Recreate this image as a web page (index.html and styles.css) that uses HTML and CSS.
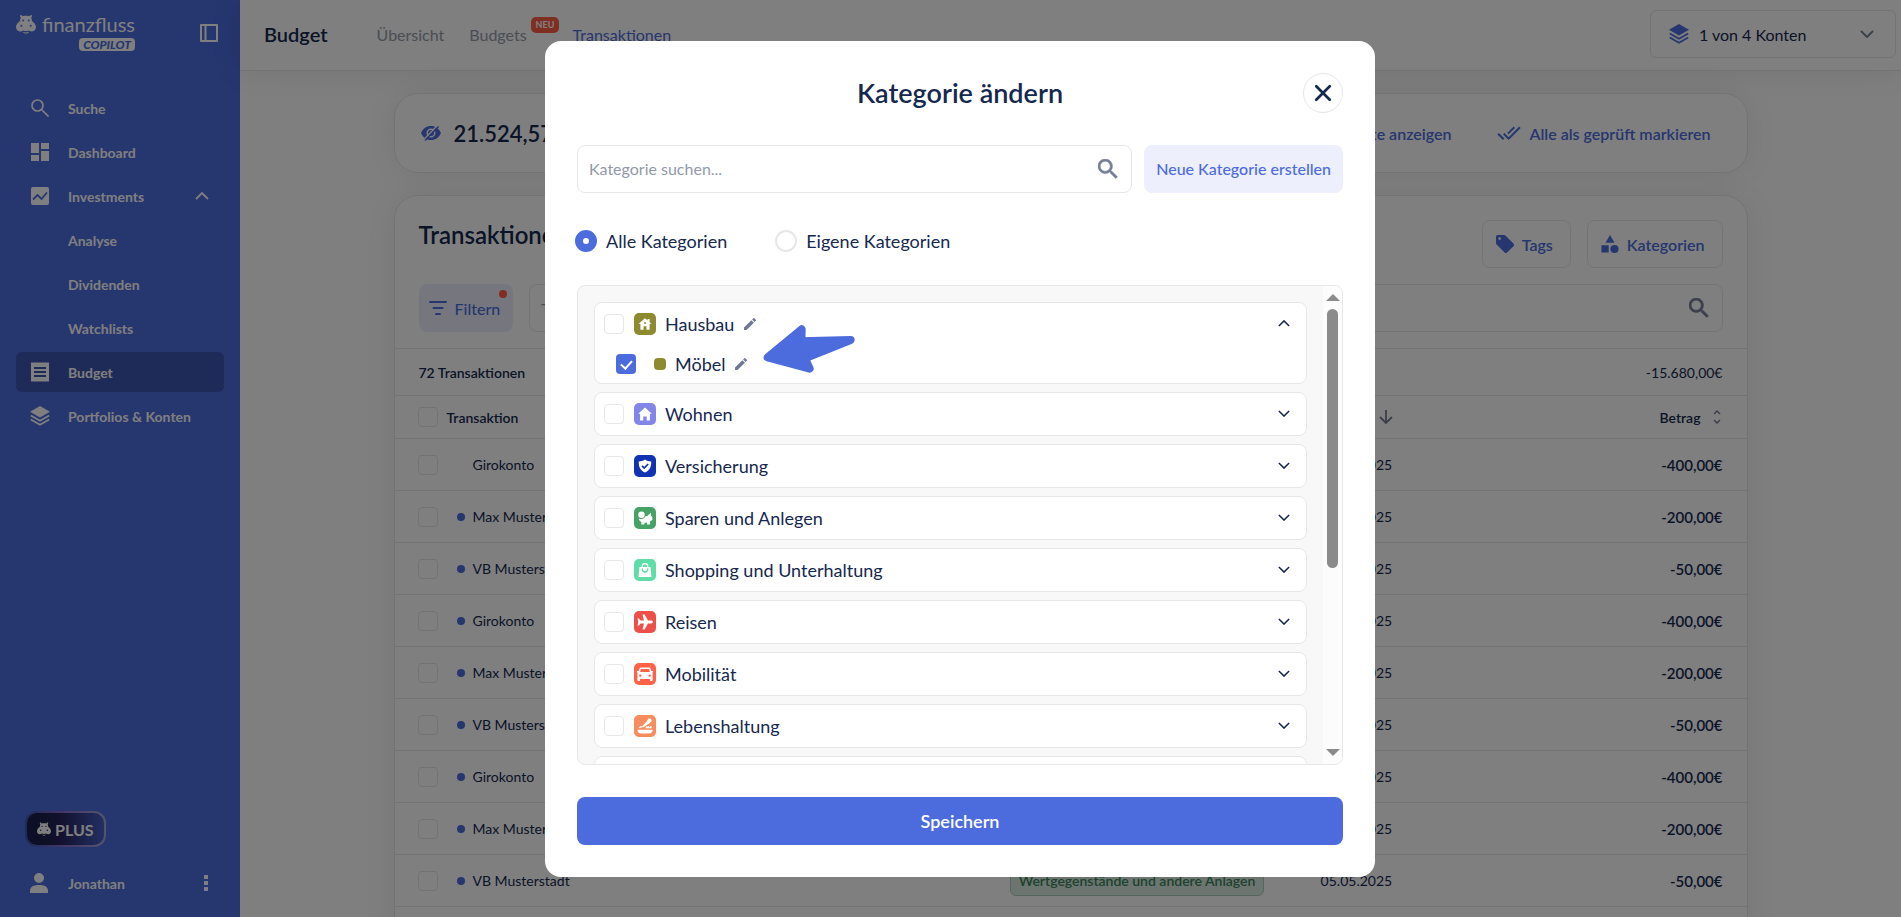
FILE: index.html
```html
<!DOCTYPE html>
<html lang="de">
<head>
    <meta charset="UTF-8">
    <meta name="viewport" content="width=device-width, initial-scale=1.0">
    <title>Budget - Transaktionen</title>
    <link rel="stylesheet" href="styles.css">
</head>
<body>
    <svg class="sprite" aria-hidden="true">
        <symbol id="hippo" viewBox="0 0 20 19">
            <path fill-rule="evenodd" d="M4 1.2C4 .3 5.300 0 6 1l.6.8C8.500 1.200 11.500 1.200 13.400 1.800L14 1c.7-1 2-.7 2 .2 0 .9-.4 1.600-.9 2 .6 1 .9 2.200 1 3.500C18.300 8 20 10.200 20 12.600 20 15.200 18.200 17 16 17c-1.200 0-2.200-.5-3-1.100-.9.4-1.900.6-3 .6s-2.100-.2-3-.6c-.8.6-1.800 1.100-3 1.100-2.200 0-4-1.800-4-4.400C0 10.200 1.700 8 3.900 6.700c.1-1.300.4-2.500 1-3.500C4.400 2.800 4 2.100 4 1.200zM7.200 5a.9.9 0 100 1.800.9.9 0 000-1.800zm5.600 0a.9.9 0 100 1.800.9.9 0 000-1.800zM5.300 10.200a1 1 0 100 2 1 1 0 000-2zm9.400 0a1 1 0 100 2 1 1 0 000-2z"/>
            <path d="M7 17.500c2 .6 4 .6 6 0-.8 2-5.200 2-6 0z"/>
        </symbol>
        <symbol id="search" viewBox="3 3 18 18">
            <path d="M15.500 14h-.79l-.28-.27C15.410 12.590 16 11.110 16 9.500 16 5.910 13.090 3 9.500 3S3 5.910 3 9.500 5.910 16 9.500 16c1.610 0 3.090-.59 4.230-1.570l.27.28v.79l5 4.990L20.490 19l-4.990-5zm-6 0C7.010 14 5 11.990 5 9.500S7.010 5 9.500 5 14 7.010 14 9.500 11.990 14 9.500 14z" stroke="currentColor" stroke-width=".5"/>
        </symbol>
        <symbol id="search-thin" viewBox="0 0 18 18">
            <path d="M11 11l6.500 6.500M12 6.500a5.500 5.500 0 11-11 0 5.500 5.500 0 0111 0z" fill="none" stroke="currentColor" stroke-width="1.700"/>
        </symbol>
        <symbol id="dashboard" viewBox="3 3 18 18">
            <path d="M3 13h8V3H3v10zm0 8h8v-6H3v6zm10 0h8V11h-8v10zm0-18v6h8V3h-8z"/>
        </symbol>
        <symbol id="chart" viewBox="0 0 18 18">
            <path d="M2 0h14a2 2 0 012 2v14a2 2 0 01-2 2H2a2 2 0 01-2-2V2a2 2 0 012-2z"/>
            <path d="M2 12.500L6.500 8l4 4L16 5.500" fill="none" stroke="#4c6cde" stroke-width="1.800"/>
        </symbol>
        <symbol id="receipt" viewBox="3 2 18 20">
            <path d="M18 17H6v-2h12v2zm0-4H6v-2h12v2zm0-4H6V7h12v2zM3 22l1-1 1 1 1-1 1 1 1-1 1 1 1-1 1 1 1-1 1 1 1-1 1 1 1-1 1 1 1-1 1 1 1-1 1 1V2l-1 1-1-1-1 1-1-1-1 1-1-1-1 1-1-1-1 1-1-1-1 1-1-1-1 1-1-1-1 1-1-1-1 1-1-1z" fill-rule="evenodd"/>
        </symbol>
        <symbol id="layers" viewBox="0 0 20 20">
            <path d="M10 0l10 5.800-10 5.800L0 5.800z"/>
            <path d="M.8 9.500L10 14.800l9.200-5.300M.8 13.400L10 18.700l9.200-5.300" fill="none" stroke="currentColor" stroke-width="1.700"/>
        </symbol>
        <symbol id="person" viewBox="0 0 18 20">
            <path d="M9 0a5 5 0 110 10A5 5 0 019 0zM0 20v-2c0-4 3-6 9-6s9 2 9 6v2z"/>
        </symbol>
        <symbol id="dots" viewBox="0 0 4 16">
            <path d="M0 0h4v4H0zM0 6h4v4H0zM0 12h4v4H0z"/>
        </symbol>
        <symbol id="panel" viewBox="0 0 18 18">
            <path d="M1 1h16v16H1zM5.500 1v16" fill="none" stroke="currentColor" stroke-width="2" stroke-linejoin="round"/>
        </symbol>
        <symbol id="chevron" viewBox="0 0 14 8">
            <path d="M1 1l6 6 6-6" fill="none" stroke="currentColor" stroke-width="1.800"/>
        </symbol>
        <symbol id="eye-off" viewBox="0 0 20 16">
            <path d="M10 1c4.500 0 8 2.600 10 7-2 4.400-5.500 7-10 7S2 12.400 0 8c2-4.400 5.500-7 10-7zm0 2.500a4.500 4.500 0 100 9 4.500 4.500 0 000-9z" fill-rule="evenodd"/>
            <circle cx="10" cy="8" r="3"/>
            <path d="M3 14.500L16.500.5" stroke="#fff" stroke-width="1.500"/>
            <path d="M4 15.500L17.500 1.500" stroke="currentColor" stroke-width="1.400"/>
        </symbol>
        <symbol id="done-all" viewBox="0 5 24 14">
            <path d="M18 7l-1.410-1.410-6.340 6.340 1.410 1.410L18 7zm4.240-1.410L11.660 16.170 7.480 12l-1.410 1.410L11.660 19l12-12-1.420-1.410zM.41 13.410L6 19l1.410-1.410L1.830 12 .41 13.410z"/>
        </symbol>
        <symbol id="tag" viewBox="2 2 20 20">
            <path d="M21.410 11.580l-9-9C12.050 2.220 11.550 2 11 2H4c-1.100 0-2 .9-2 2v7c0 .55.22 1.050.59 1.420l9 9c.36.36.86.58 1.410.58s1.050-.22 1.410-.59l7-7c.37-.36.59-.86.59-1.410s-.23-1.060-.59-1.420zM6 7.500a1.500 1.500 0 110-3 1.500 1.500 0 010 3z"/>
        </symbol>
        <symbol id="shapes" viewBox="3 2 19 20">
            <path d="M12.500 2L7.500 10.500h10zM3 13.500h8v8H3z"/>
            <circle cx="17.500" cy="17.500" r="4.500"/>
        </symbol>
        <symbol id="filter" viewBox="0 0 18 14">
            <path d="M1 1h16M4.500 7h9M7 13h4" stroke="currentColor" stroke-width="2" stroke-linecap="round"/>
        </symbol>
        <symbol id="arrow-down" viewBox="0 0 14 14">
            <path d="M7 0v12.500M1 7l6 6 6-6" fill="none" stroke="currentColor" stroke-width="1.800"/>
        </symbol>
        <symbol id="sort" viewBox="0 0 8 14">
            <path d="M1 4l3-3 3 3M1 10l3 3 3-3" fill="none" stroke="currentColor" stroke-width="1.500"/>
        </symbol>
        <symbol id="close" viewBox="0 0 16 16">
            <path d="M2 2l12 12M14 2L2 14" stroke="currentColor" stroke-width="2.400" stroke-linecap="round"/>
        </symbol>
        <symbol id="pencil" viewBox="3 3 18 18">
            <path d="M3 17.250V21h3.750L17.810 9.940l-3.750-3.750L3 17.250zM20.710 7.040a1 1 0 000-1.410l-2.340-2.340a1 1 0 00-1.410 0l-1.830 1.830 3.750 3.750 1.830-1.830z"/>
        </symbol>
        <symbol id="cat-build" viewBox="0 0 22 22">
            <path d="M11 5.200l2.600 2.200V6h2v3.100l1.900 1.700h-1.900v6h-3.200v-3.500H9.600v3.500H6.400v-6H4.500z"/>
            <circle cx="11" cy="10" r="1" fill="#8d8a30"/>
        </symbol>
        <symbol id="cat-home" viewBox="0 0 22 22">
            <path d="M11 4.600l6.800 6.200h-1.900V17.500h-3.200v-4H9.300v4H6.100v-6.700H4.200z"/>
        </symbol>
        <symbol id="cat-shield" viewBox="0 0 22 22">
            <path d="M11 4.500c2 1.500 4 1.900 6.200 1.900.4 5-1.700 9-6.200 11.100C6.500 15.400 4.400 11.400 4.800 6.400c2.200 0 4.200-.4 6.200-1.900z"/>
            <path d="M8 10.800l2.300 2.300L14.200 9" fill="none" stroke="#1232b4" stroke-width="1.700"/>
        </symbol>
        <symbol id="cat-pig" viewBox="0 0 22 22">
            <circle cx="7.500" cy="7.700" r="3.200"/>
            <path d="M4.800 11.500c2.600 1.300 5.700.3 6.900-2.500h1.500l3.800-3.200v3l1.300 1.300v2.900l-2.200 1.300v3.200H13v-1.800h-2.600v1.800H7.300v-2.600c-1.600-.8-2.500-2-2.500-3.400z"/>
        </symbol>
        <symbol id="cat-bag" viewBox="0 0 22 22">
            <path d="M5.500 8h11l1 10h-13z"/>
            <path d="M8.300 9V7.300a2.700 2.700 0 015.400 0V9" fill="none" stroke="#fff" stroke-width="1.300"/>
            <path d="M8.300 9.500v.8a2.700 2.700 0 005.400 0v-.8" fill="none" stroke="#5edea6" stroke-width="1.300"/>
        </symbol>
        <symbol id="cat-plane" viewBox="0 0 22 22">
            <path d="M8.500 3.500h2L14 9.600h3.300c2.200 0 2.200 2.800 0 2.800H14l-3.500 6.100h-2l1.500-6.100H6.500L5 14.400H3.500L4.300 11l-.8-3.400H5l1.500 2H10z"/>
        </symbol>
        <symbol id="cat-car" viewBox="0 0 22 22">
            <path fill-rule="evenodd" d="M7 4.500h8c.8 0 1.300.4 1.500 1L17.400 8h1.700v1.500h-1l.5 1V17c0 .6-.4 1-1 1h-1.500v-2H5.900v2H4.400c-.6 0-1-.4-1-1v-6.500l.5-1h-1V8h1.700L5.500 5.500c.2-.6.7-1 1.500-1zM6.900 6.100L6.100 9h9.800l-.8-2.900zM6.300 11.400a1.200 1.200 0 100 2.400 1.200 1.200 0 000-2.400zm9.400 0a1.200 1.200 0 100 2.400 1.200 1.200 0 000-2.400z"/>
        </symbol>
        <symbol id="cat-food" viewBox="0 0 22 22">
            <path d="M3.500 14.800h15.200c0 2.400-1.500 3.700-3.700 3.700H7.200c-2.200 0-3.700-1.300-3.700-3.700z"/>
            <path d="M4.300 13.200l2-2.200 2 .2L12.500 6.500l2-3 2.500.3.800 2.200-2.300 2.200-5.700 3.800z"/>
            <path d="M11.500 13.300l.5-2.300 1.300 1 1-1.200 1.200 1.200 1.300-1.200 1 1-.2 1.500z"/>
        </symbol>
    </svg>

    <aside class="sidebar">
        <div class="brand">
            <div class="logo">
                <div class="logo-name"><svg class="logo-hippo"><use href="#hippo"/></svg>finanzfluss</div>
                <span class="logo-badge">COPILOT</span>
            </div>
            <button class="icon-button" aria-label="Menü einklappen"><svg class="i18"><use href="#panel"/></svg></button>
        </div>
        <nav class="menu">
            <a href="#"><svg class="i18"><use href="#search-thin"/></svg>Suche</a>
            <a href="#"><svg class="i18"><use href="#dashboard"/></svg>Dashboard</a>
            <a href="#"><svg class="i18"><use href="#chart"/></svg>Investments<svg class="chevron up menu-chevron"><use href="#chevron"/></svg></a>
            <a href="#" class="sub">Analyse</a>
            <a href="#" class="sub">Dividenden</a>
            <a href="#" class="sub">Watchlists</a>
            <a href="#" class="active"><svg class="i18 tall"><use href="#receipt"/></svg>Budget</a>
            <a href="#"><svg class="i18 tall wide"><use href="#layers"/></svg>Portfolios &amp; Konten</a>
        </nav>
        <div class="sidebar-bottom">
            <a href="#" class="plus"><svg class="plus-hippo"><use href="#hippo"/></svg>PLUS</a>
            <div class="user">
                <svg class="i18 tall"><use href="#person"/></svg>
                <span>Jonathan</span>
                <button class="icon-button" aria-label="Benutzermenü"><svg class="dots"><use href="#dots"/></svg></button>
            </div>
        </div>
    </aside>

    <div class="page">
        <header class="topbar">
            <h1>Budget</h1>
            <nav class="tabs">
                <a href="#">Übersicht</a>
                <a href="#" class="has-badge">Budgets<span class="new-badge">NEU</span></a>
                <a href="#" class="current">Transaktionen</a>
            </nav>
            <button class="accounts">
                <svg class="i20"><use href="#layers"/></svg>
                <span>1 von 4 Konten</span>
                <svg class="chevron"><use href="#chevron"/></svg>
            </button>
        </header>

        <main class="content">
            <section class="card balance">
                <svg class="eye"><use href="#eye-off"/></svg>
                <strong>21.524,57€</strong>
                <div class="balance-actions">
                    <a href="#">Ungeprüfte anzeigen</a>
                    <a href="#"><svg class="done"><use href="#done-all"/></svg>Alle als geprüft markieren</a>
                </div>
            </section>

            <section class="card transactions">
                <div class="card-head">
                    <h2>Transaktionen</h2>
                    <button class="outline"><svg class="i18"><use href="#tag"/></svg>Tags</button>
                    <button class="outline"><svg class="i18"><use href="#shapes"/></svg>Kategorien</button>
                </div>
                <div class="filters">
                    <button class="filter"><svg class="filter-icon"><use href="#filter"/></svg>Filtern<span class="filter-dot"></span></button>
                    <label class="search-box">
                        <input type="text" placeholder="Transaktionen suchen" aria-label="Transaktionen suchen">
                        <svg class="i20"><use href="#search"/></svg>
                    </label>
                </div>
                <div class="summary"><strong>72 Transaktionen</strong><span>-15.680,00€</span></div>
                <table>
                    <colgroup>
                        <col class="col-name">
                        <col class="col-category">
                        <col class="col-date">
                        <col>
                    </colgroup>
                    <thead>
                        <tr>
                            <th><div class="name"><input type="checkbox" aria-label="Alle auswählen">Transaktion</div></th>
                            <th>Kategorie</th>
                            <th><div class="date-head">Datum<svg class="arrow-icon"><use href="#arrow-down"/></svg></div></th>
                            <th><div class="amount-head">Betrag<svg class="sort"><use href="#sort"/></svg></div></th>
                        </tr>
                    </thead>
                    <tbody>
                        <tr>
                            <td><div class="name"><input type="checkbox" aria-label="Auswählen"><i class="dot seen"></i>Girokonto</div></td>
                            <td></td><td>05.05.2025</td><td class="amount">-400,00€</td>
                        </tr>
                        <tr>
                            <td><div class="name"><input type="checkbox" aria-label="Auswählen"><i class="dot"></i>Max Mustermann</div></td>
                            <td></td><td>05.05.2025</td><td class="amount">-200,00€</td>
                        </tr>
                        <tr>
                            <td><div class="name"><input type="checkbox" aria-label="Auswählen"><i class="dot"></i>VB Musterstadt</div></td>
                            <td></td><td>05.05.2025</td><td class="amount">-50,00€</td>
                        </tr>
                        <tr>
                            <td><div class="name"><input type="checkbox" aria-label="Auswählen"><i class="dot"></i>Girokonto</div></td>
                            <td></td><td>05.05.2025</td><td class="amount">-400,00€</td>
                        </tr>
                        <tr>
                            <td><div class="name"><input type="checkbox" aria-label="Auswählen"><i class="dot"></i>Max Mustermann</div></td>
                            <td></td><td>05.05.2025</td><td class="amount">-200,00€</td>
                        </tr>
                        <tr>
                            <td><div class="name"><input type="checkbox" aria-label="Auswählen"><i class="dot"></i>VB Musterstadt</div></td>
                            <td></td><td>05.05.2025</td><td class="amount">-50,00€</td>
                        </tr>
                        <tr>
                            <td><div class="name"><input type="checkbox" aria-label="Auswählen"><i class="dot"></i>Girokonto</div></td>
                            <td></td><td>05.05.2025</td><td class="amount">-400,00€</td>
                        </tr>
                        <tr>
                            <td><div class="name"><input type="checkbox" aria-label="Auswählen"><i class="dot"></i>Max Mustermann</div></td>
                            <td></td><td>05.05.2025</td><td class="amount">-200,00€</td>
                        </tr>
                        <tr>
                            <td><div class="name"><input type="checkbox" aria-label="Auswählen"><i class="dot"></i>VB Musterstadt</div></td>
                            <td><span class="category-tag">Wertgegenstände und andere Anlagen</span></td><td>05.05.2025</td><td class="amount">-50,00€</td>
                        </tr>
                        <tr><td></td><td></td><td></td><td></td></tr>
                    </tbody>
                </table>
            </section>
        </main>
    </div>

    <div class="overlay">
        <div class="modal" role="dialog" aria-labelledby="modal-title">
            <div class="modal-head">
                <h2 id="modal-title">Kategorie ändern</h2>
                <button class="close" aria-label="Schließen"><svg><use href="#close"/></svg></button>
            </div>
            <div class="modal-search">
                <label class="search-box">
                    <input type="text" placeholder="Kategorie suchen..." aria-label="Kategorie suchen">
                    <svg class="i20"><use href="#search"/></svg>
                </label>
                <button class="create">Neue Kategorie erstellen</button>
            </div>
            <div class="radios">
                <label><input type="radio" name="scope" checked>Alle Kategorien</label>
                <label><input type="radio" name="scope">Eigene Kategorien</label>
            </div>
            <div class="list">
                <div class="list-items">
                    <div class="item open">
                        <div class="item-row">
                            <label><input type="checkbox"><svg class="cat build"><use href="#cat-build"/></svg>Hausbau</label>
                            <button class="icon-button edit" aria-label="Hausbau bearbeiten"><svg><use href="#pencil"/></svg></button>
                            <button class="icon-button toggle" aria-label="Zuklappen"><svg class="chevron up"><use href="#chevron"/></svg></button>
                        </div>
                        <div class="item-row child">
                            <label><input type="checkbox" checked><i class="swatch"></i>Möbel</label>
                            <button class="icon-button edit" aria-label="Möbel bearbeiten"><svg><use href="#pencil"/></svg></button>
                            <svg class="pointer" viewBox="668 164 279 150">
                                <path d="M682 264L784 180l-1 36 148-4-137 55 14 31z"/>
                            </svg>
                        </div>
                    </div>
                    <div class="item"><div class="item-row">
                        <label><input type="checkbox"><svg class="cat home"><use href="#cat-home"/></svg>Wohnen</label>
                        <button class="icon-button toggle" aria-label="Aufklappen"><svg class="chevron"><use href="#chevron"/></svg></button>
                    </div></div>
                    <div class="item"><div class="item-row">
                        <label><input type="checkbox"><svg class="cat shield"><use href="#cat-shield"/></svg>Versicherung</label>
                        <button class="icon-button toggle" aria-label="Aufklappen"><svg class="chevron"><use href="#chevron"/></svg></button>
                    </div></div>
                    <div class="item"><div class="item-row">
                        <label><input type="checkbox"><svg class="cat pig"><use href="#cat-pig"/></svg>Sparen und Anlegen</label>
                        <button class="icon-button toggle" aria-label="Aufklappen"><svg class="chevron"><use href="#chevron"/></svg></button>
                    </div></div>
                    <div class="item"><div class="item-row">
                        <label><input type="checkbox"><svg class="cat bag"><use href="#cat-bag"/></svg>Shopping und Unterhaltung</label>
                        <button class="icon-button toggle" aria-label="Aufklappen"><svg class="chevron"><use href="#chevron"/></svg></button>
                    </div></div>
                    <div class="item"><div class="item-row">
                        <label><input type="checkbox"><svg class="cat plane"><use href="#cat-plane"/></svg>Reisen</label>
                        <button class="icon-button toggle" aria-label="Aufklappen"><svg class="chevron"><use href="#chevron"/></svg></button>
                    </div></div>
                    <div class="item"><div class="item-row">
                        <label><input type="checkbox"><svg class="cat car"><use href="#cat-car"/></svg>Mobilität</label>
                        <button class="icon-button toggle" aria-label="Aufklappen"><svg class="chevron"><use href="#chevron"/></svg></button>
                    </div></div>
                    <div class="item"><div class="item-row">
                        <label><input type="checkbox"><svg class="cat food"><use href="#cat-food"/></svg>Lebenshaltung</label>
                        <button class="icon-button toggle" aria-label="Aufklappen"><svg class="chevron"><use href="#chevron"/></svg></button>
                    </div></div>
                    <div class="item"><div class="item-row"></div></div>
                </div>
                <div class="scrollbar">
                    <span class="scroll-up"></span>
                    <span class="scroll-track"><span class="scroll-thumb"></span></span>
                    <span class="scroll-down"></span>
                </div>
            </div>
            <button class="save">Speichern</button>
        </div>
    </div>
</body>
</html>
```
FILE: styles.css
```css
:root {
    --blue: #4c6cde;
    --navy: #15284f;
    --grey: #747f95;
    --line: #e7e7ea;
    --light-blue: #edeffc;
    --red: #ff5e45;
}
* {
    box-sizing: border-box;
}
body {
    display: flex;
    height: 100vh;
    margin: 0;
    overflow: hidden;
    font-family: Lato, "Liberation Sans", sans-serif;
    font-size: 16px;
    color: var(--navy);
    background: #fff;
}
h1, h2 {
    margin: 0;
    font-weight: 600;
}
strong, th {
    font-weight: 600;
}
a {
    color: inherit;
    text-decoration: none;
}
button {
    display: flex;
    align-items: center;
    padding: 0;
    border: 0;
    background: none;
    font: inherit;
    color: inherit;
    cursor: pointer;
}
svg {
    flex: none;
    fill: currentColor;
}
.sprite {
    position: absolute;
    width: 0;
    height: 0;
}
.i18 {
    width: 18px;
    height: 18px;
}
.i20 {
    width: 20px;
    height: 20px;
}
.tall {
    height: 20px;
}
.chevron {
    width: 14px;
    height: 8px;
}
.up {
    transform: rotate(180deg);
}

/* sidebar */
.sidebar {
    display: flex;
    flex-direction: column;
    flex: none;
    width: 240px;
    padding: 12px 16px 14px;
    color: #fff;
    background: var(--blue);
    font-size: 14px;
    font-weight: 700;
}
.brand {
    display: flex;
    justify-content: space-between;
    align-items: flex-start;
    height: 76px;
    padding-right: 6px;
}
.brand .icon-button {
    margin-top: 12px;
}
.logo {
    display: flex;
    flex-direction: column;
    align-items: flex-end;
}
.logo-name {
    display: flex;
    align-items: center;
    gap: 6px;
    font-size: 20px;
    line-height: 24px;
    font-weight: 400;
}
.logo-hippo {
    width: 20px;
    height: 20px;
}
.logo-badge {
    margin-top: 2px;
    padding: 0 4px;
    border-radius: 4px;
    color: var(--blue);
    background: #fff;
    font-size: 12px;
    line-height: 13px;
    font-weight: 900;
    font-style: italic;
}
.menu {
    display: flex;
    flex-direction: column;
    gap: 4px;
}
.menu a {
    display: flex;
    align-items: center;
    gap: 19px;
    height: 40px;
    padding: 0 15px;
    border-radius: 6px;
}
.menu .sub {
    padding-left: 52px;
}
.menu .active {
    background: #3c55af;
}
.menu .wide {
    width: 20px;
    margin: 0 -1px;
}
.menu-chevron {
    margin-left: auto;
}
.sidebar-bottom {
    margin-top: auto;
}
.plus {
    display: inline-flex;
    align-items: center;
    gap: 4px;
    height: 36px;
    margin-left: 9px;
    padding: 0 10px;
    border: 2px solid transparent;
    border-radius: 12px;
    background: linear-gradient(90deg, #191f4a 20%, #26235f 45%, #4660c6) padding-box,
        linear-gradient(90deg, #3b55b5, #8b6fd0 50%, #a5abd8) border-box;
    font-size: 16px;
}
.plus-hippo {
    width: 14px;
    height: 14px;
}
.user {
    display: flex;
    align-items: center;
    gap: 20px;
    margin-top: 16px;
    padding: 0 16px 0 14px;
    height: 40px;
}
.user .icon-button {
    margin-left: auto;
}
.dots {
    width: 4px;
    height: 16px;
}

/* top bar */
.page {
    flex: 1;
    min-width: 0;
    background: #fefefe;
}
.topbar {
    display: flex;
    align-items: center;
    height: 71px;
    padding: 0 5px 2px 24px;
    border-bottom: 1px solid var(--line);
    box-shadow: 0 0 32px rgba(0, 0, 0, .09);
}
.topbar h1 {
    font-size: 20px;
}
.tabs {
    display: flex;
    gap: 25px;
    margin-left: 49px;
    color: #969cab;
}
.tabs .current {
    color: var(--blue);
    text-decoration: underline;
}
.has-badge {
    position: relative;
    margin-right: 21px;
}
.new-badge {
    position: absolute;
    left: 100%;
    bottom: 11px;
    margin-left: 4px;
    padding: 0 5px;
    border-radius: 5px;
    color: #fff;
    background: var(--red);
    font-size: 9px;
    line-height: 16px;
    font-weight: 700;
}
.accounts {
    gap: 10px;
    width: 246px;
    height: 48px;
    margin-left: auto;
    padding: 0 21px 0 18px;
    border: 1px solid var(--line);
    border-radius: 6px;
}
.accounts .i20 {
    color: var(--blue);
}
.accounts .chevron {
    margin-left: auto;
    color: var(--grey);
}

/* cards */
.content {
    max-width: 1354px;
    margin: 22px auto 0;
}
.card {
    border: 1px solid var(--line);
    border-radius: 24px;
    background: #fff;
    box-shadow: 0 0 32px rgba(0, 0, 0, .07);
}
.balance {
    display: flex;
    align-items: center;
    gap: 13px;
    height: 80px;
    padding: 0 36px 0 26px;
    color: var(--blue);
}
.balance strong {
    font-size: 22px;
    color: var(--navy);
}
.eye {
    width: 20px;
    height: 16px;
}
.balance-actions {
    display: flex;
    gap: 46px;
    margin-left: auto;
    font-weight: 600;
}
.balance-actions a {
    display: flex;
    align-items: center;
    gap: 8px;
}
.done {
    width: 24px;
    height: 14px;
}
.transactions {
    margin-top: 22px;
}
.card-head {
    display: flex;
    gap: 16px;
    padding: 24px 24px 0;
}
.card-head h2 {
    margin-right: auto;
    font-size: 24px;
    line-height: 30px;
}
.outline {
    gap: 8px;
    height: 48px;
    padding: 0 17px 0 13px;
    border: 1px solid var(--line);
    border-radius: 8px;
    color: var(--blue);
    font-weight: 600;
}
.filters {
    display: flex;
    gap: 16px;
    padding: 16px 24px;
}
.filter {
    position: relative;
    gap: 8px;
    height: 48px;
    padding: 0 13px 0 10px;
    border-radius: 8px;
    color: var(--blue);
    background: var(--light-blue);
    font-weight: 500;
}
.filter-icon {
    width: 18px;
    height: 14px;
}
.filter-dot {
    position: absolute;
    top: 6px;
    right: 6px;
    width: 8px;
    height: 8px;
    border-radius: 50%;
    background: var(--red);
}
.search-box {
    display: flex;
    align-items: center;
    flex: 1;
    height: 48px;
    padding: 0 13px 0 11px;
    border: 1px solid var(--line);
    border-radius: 8px;
    color: var(--grey);
}
.search-box input {
    flex: 1;
    padding: 0;
    border: 0;
    outline: 0;
    background: none;
    font: inherit;
}
.search-box input::placeholder {
    color: #9299ab;
}
.summary {
    display: flex;
    justify-content: space-between;
    align-items: center;
    height: 47px;
    padding: 0 24px;
    border-top: 1px solid var(--line);
    font-size: 14px;
}
table {
    width: 100%;
    border-collapse: collapse;
    table-layout: fixed;
    font-size: 14px;
}
.col-name {
    width: 45.5%;
}
.col-category {
    width: 23%;
}
.col-date {
    width: 10%;
}
th, td {
    height: 52px;
    padding: 0;
    border-top: 1px solid var(--line);
    text-align: left;
    white-space: nowrap;
}
th {
    height: 43px;
}
.name {
    display: flex;
    align-items: center;
    padding-left: 23px;
}
th input[type="checkbox"] {
    margin-right: 9px;
}
.dot {
    width: 8px;
    height: 8px;
    margin: 0 8px 0 19px;
    border-radius: 50%;
    background: var(--blue);
}
.dot.seen {
    visibility: hidden;
}
.amount {
    padding-right: 24px;
    text-align: right;
    font-size: 15px;
    font-weight: 600;
}
.date-head, .amount-head {
    display: flex;
    align-items: center;
    gap: 12px;
}
.date-head {
    gap: 16px;
}
.amount-head {
    justify-content: flex-end;
    padding-right: 26px;
}
.arrow-icon {
    width: 14px;
    height: 14px;
    color: var(--grey);
}
.sort {
    width: 8px;
    height: 14px;
    color: var(--grey);
}
.category-tag {
    display: inline-block;
    padding: 0 8px;
    border: 1px solid #a9ceb8;
    border-radius: 6px;
    color: #3a855b;
    background: #dbeae1;
    line-height: 28px;
    font-weight: 600;
}
input[type="checkbox"] {
    flex: none;
    appearance: none;
    width: 20px;
    height: 20px;
    margin: 0;
    border: 1px solid var(--line);
    border-radius: 4px;
    background: #fff;
}

/* dialog */
.overlay {
    position: fixed;
    inset: 0;
    display: flex;
    justify-content: center;
    align-items: center;
    padding-left: 19px;
    background: rgba(0, 0, 0, .5);
}
.modal {
    width: 830px;
    padding: 32px;
    border-radius: 16px;
    background: #fff;
}
.modal-head {
    display: grid;
    grid-template-columns: 1fr auto 1fr;
    align-items: center;
}
.modal-head h2 {
    grid-column: 2;
    font-size: 27px;
}
.close {
    justify-self: end;
    justify-content: center;
    width: 40px;
    height: 40px;
    border: 1px solid var(--line);
    border-radius: 50%;
}
.close svg {
    width: 18px;
    height: 18px;
}
.modal-search {
    display: flex;
    gap: 12px;
    margin-top: 32px;
}
.create {
    padding: 0 12px;
    border-radius: 8px;
    color: var(--blue);
    background: var(--light-blue);
    font-weight: 500;
}
.radios {
    display: flex;
    gap: 48px;
    margin: 36px 0 32px -2px;
    font-size: 18px;
}
.radios label {
    display: flex;
    align-items: center;
    gap: 9px;
    height: 24px;
}
.radios input {
    appearance: none;
    width: 22px;
    height: 22px;
    margin: 0;
    border: 2px solid var(--line);
    border-radius: 50%;
}
.radios input:checked {
    border: 8px solid var(--blue);
    background: #fff;
}
.list {
    display: flex;
    height: 480px;
    overflow: hidden;
    border: 1px solid var(--line);
    border-radius: 8px;
    background: #f8f8f8;
    font-size: 18px;
}
.list-items {
    display: flex;
    flex-direction: column;
    flex: 1;
    gap: 8px;
    padding: 16px;
}
.item {
    flex: none;
    border: 1px solid var(--line);
    border-radius: 8px;
    background: #fff;
}
.item-row {
    display: flex;
    align-items: center;
    height: 42px;
    padding: 0 16px 0 9px;
}
.item-row label {
    display: flex;
    align-items: center;
}
.item-row input[type="checkbox"] {
    margin-right: 10px;
}
.item-row input[type="checkbox"]:checked {
    position: relative;
    border: 0;
    background: var(--blue);
}
.item-row input:checked::after {
    content: "";
    position: absolute;
    left: 7px;
    top: 4px;
    width: 5px;
    height: 9px;
    border: solid #fff;
    border-width: 0 2px 2px 0;
    transform: rotate(42deg);
}
.item-row.child {
    position: relative;
    height: 38px;
    padding-left: 21px;
}
.edit {
    margin-left: 10px;
    color: #6f7a92;
}
.edit svg {
    width: 12px;
    height: 12px;
}
.toggle {
    margin-left: auto;
}
.toggle .chevron {
    width: 12px;
    height: 7px;
}
.cat {
    width: 22px;
    height: 22px;
    margin-right: 9px;
    border-radius: 5px;
    fill: #fff;
}
.build {
    background: #8d8a30;
}
.home {
    background: #8286e8;
}
.shield {
    background: #1232b4;
}
.pig {
    background: #46a265;
}
.bag {
    background: #5edea6;
}
.plane {
    background: #ec5048;
}
.car {
    background: #ff6347;
}
.food {
    background: #f78c5e;
}
.swatch {
    width: 12px;
    height: 12px;
    margin: 0 9px 0 8px;
    border-radius: 4px;
    background: #8d8a30;
}
.pointer {
    position: absolute;
    left: 168px;
    top: -21px;
    width: 93px;
    height: 50px;
    fill: var(--blue);
    stroke: var(--blue);
    stroke-width: 24;
    stroke-linejoin: round;
}
.scrollbar {
    display: flex;
    flex-direction: column;
    align-items: center;
    width: 19px;
    padding: 8px 0;
    background: #fcfcfc;
}
.scroll-up, .scroll-down {
    border: 7px solid transparent;
    border-top-width: 0;
    border-bottom-color: #8b8b8b;
}
.scroll-down {
    border-top: 7px solid #8b8b8b;
    border-bottom-width: 0;
}
.scroll-track {
    flex: 1;
    width: 11px;
    padding: 8px 0;
}
.scroll-thumb {
    display: block;
    height: 60%;
    border-radius: 6px;
    background: #8b8b8b;
}
.save {
    justify-content: center;
    width: 100%;
    height: 48px;
    margin-top: 32px;
    border-radius: 8px;
    color: #fff;
    background: var(--blue);
    font-size: 18px;
    font-weight: 600;
}
```
